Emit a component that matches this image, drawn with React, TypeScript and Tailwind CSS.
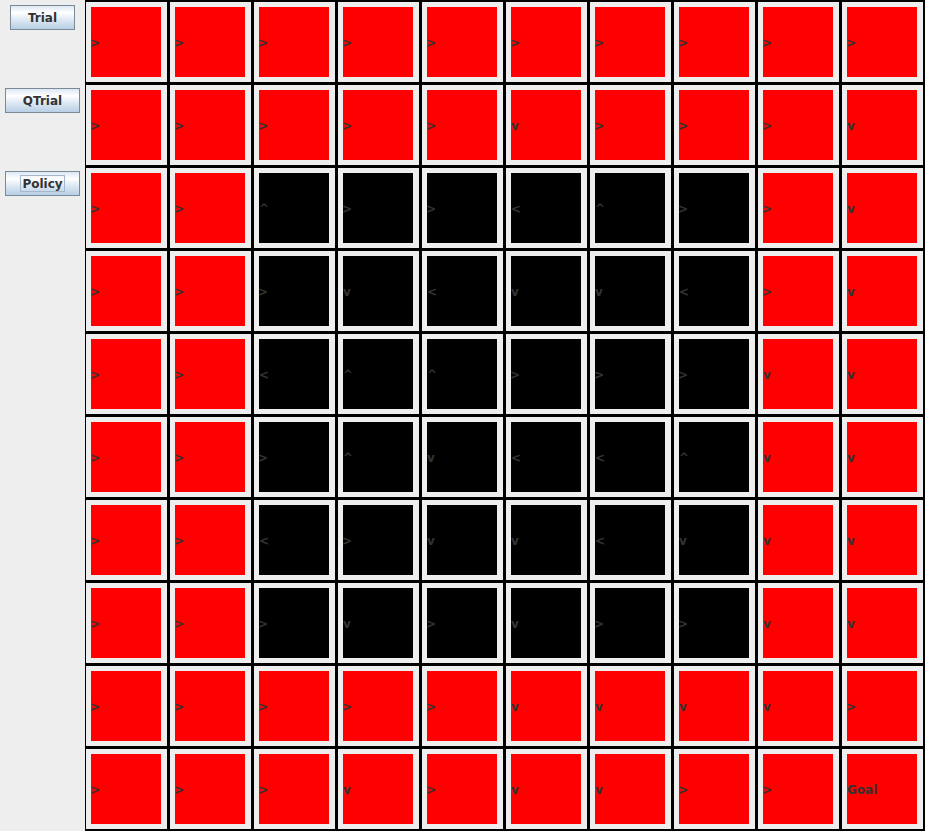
const rows: string[][] = [
  [">", ">", ">", ">", ">", ">", ">", ">", ">", ">"],
  [">", ">", ">", ">", ">", "v", ">", ">", ">", "v"],
  [">", ">", "^", ">", ">", "<", "^", ">", ">", "v"],
  [">", ">", ">", "v", "<", "v", "v", "<", ">", "v"],
  [">", ">", "<", "^", "^", ">", ">", ">", "v", "v"],
  [">", ">", ">", "^", "v", "<", "<", "^", "v", "v"],
  [">", ">", "<", ">", "v", "v", "<", "v", "v", "v"],
  [">", ">", ">", "v", ">", "v", ">", ">", "v", "v"],
  [">", ">", ">", ">", ">", "v", "v", "v", "v", ">"],
  [">", ">", ">", "v", ">", "v", "v", ">", ">", "Goal"],
];

function isWall(r: number, c: number) {
  return r >= 2 && r <= 7 && c >= 2 && c <= 7;
}

function SwingButton({ label, width, focused }: { label: string; width: string; focused?: boolean }) {
  return (
    <button
      type="button"
      className={`${width} flex h-[25px] items-center justify-center border border-[#7a8a99] bg-[linear-gradient(to_bottom,#dde8f3_0%,#ffffff_30%,#dde8f3_60%,#b8cfe5_100%)] text-[12px] font-bold text-[#333333]`}
    >
      <span className={focused ? "flex h-[17px] items-center border border-[#a3b8cc] px-[1px]" : ""}>{label}</span>
    </button>
  );
}

export default function App() {
  return (
    <div className="flex h-[831px] w-[925px] overflow-hidden bg-[#eeeeee] font-['DejaVu_Sans',sans-serif]">
      <div className="flex w-[85px] shrink-0 flex-col items-center gap-[58px] pt-[5px]">
        <SwingButton label="Trial" width="w-[65px]" />
        <SwingButton label="QTrial" width="w-[75px]" />
        <SwingButton label="Policy" width="w-[75px]" focused />
      </div>
      <div className="grid h-[831px] w-[840px] auto-rows-[83px] grid-cols-[repeat(10,84px)] bg-black">
        {rows.map((row, r) =>
          row.map((text, c) => (
            <div
              key={`${r}-${c}`}
              className="border-t-2 border-r-2 border-b border-l border-black bg-[#eeeeee] pt-[5px] pr-[6px] pb-[5px] pl-[5px]"
            >
              <div
                className={`flex h-[70px] w-[70px] items-center pt-[2px] text-[12px] font-bold text-[#333333] ${
                  isWall(r, c) ? "bg-black" : "bg-[#ff0000]"
                }`}
              >
                <span className={text === ">" ? "-ml-[1px]" : ""}>{text}</span>
              </div>
            </div>
          ))
        )}
      </div>
    </div>
  );
}
